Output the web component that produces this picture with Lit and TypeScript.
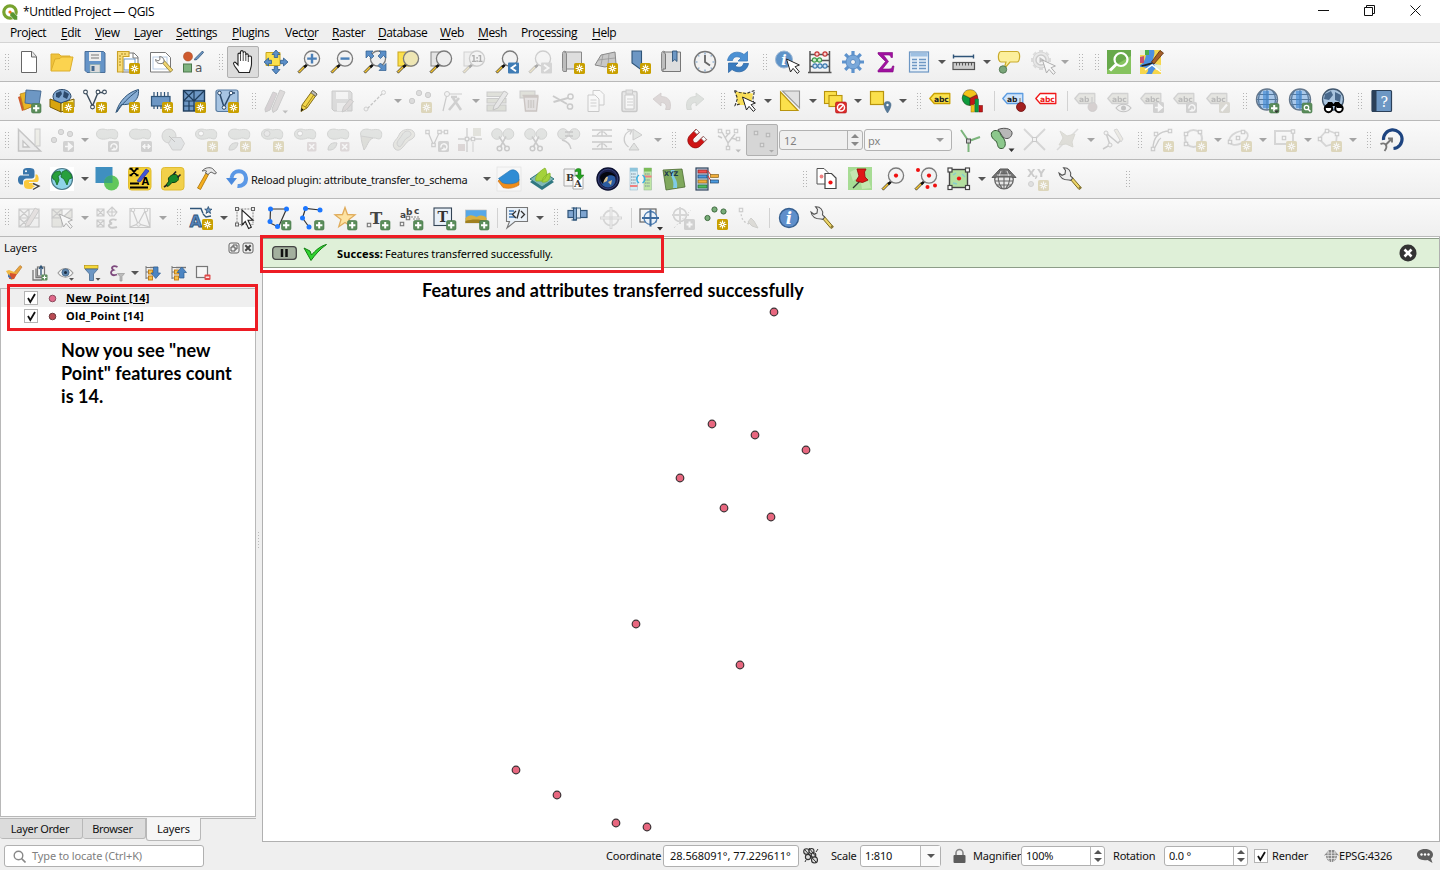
import { LitElement, html, css } from "lit";
import { customElement, property } from "lit/decorators.js";
import { styleMap } from "lit/directives/style-map.js";
import { unsafeSVG } from "lit/directives/unsafe-svg.js";

const BLUE = "#6d97c4";
const NAVY = "#2f5478";

/* ---- small drawing helpers ---- */
const P = (d: string, fill = "none", stroke = "none", w = 1, extra = "") =>
  `<path d="${d}" fill="${fill}" stroke="${stroke}" stroke-width="${w}" ${extra}/>`;
const C = (x: number, y: number, r: number, fill = "none", stroke = "none", w = 1) =>
  `<circle cx="${x}" cy="${y}" r="${r}" fill="${fill}" stroke="${stroke}" stroke-width="${w}"/>`;
const R = (x: number, y: number, w: number, h: number, fill = "none", stroke = "none", sw = 1, rx = 0) =>
  `<rect x="${x}" y="${y}" width="${w}" height="${h}" rx="${rx}" fill="${fill}" stroke="${stroke}" stroke-width="${sw}"/>`;
const T = (x: number, y: number, size: number, s: string, fill = "#333", extra = "") =>
  `<text x="${x}" y="${y}" font-size="${size}" fill="${fill}" ${extra}>${s}</text>`;

const BOLD = `font-weight="700" font-family="DejaVu Sans"`;
const SERIF = `font-weight="700" font-family="DejaVu Serif, serif"`;

const STAR =
  R(13, 13, 11, 11, "#c9a000", "none", 0, 1.6) +
  P("M18.5 14.6v7.8M14.6 18.5h7.8M15.8 15.8l5.4 5.4M21.2 15.8l-5.4 5.4", "none", "#fff", 1.1) +
  C(18.5, 18.5, 1.9, "#fff") + C(18.5, 18.5, 0.8, "#c9a000");
const PLUS = R(14.5, 14.500, 9.500, 9.500, "#5a8c5a", "#47784a", 0.6, 1.6) + P("M19.200 16v6.400M16 19.200h6.400", "none", "#fff", 2);
const TAG = (inner: string, fill: string = "#8e8e8e") => R(13, 13, 11, 11, fill, "none", 0, 1.6) + inner;
const T_ARROW = TAG(P("M15 18.5h4M18.6 15.4l3.6 3.1-3.6 3.1z", "#fff", "#fff", 1.6));
const T_ROT = TAG(P("M16 19.5a3 3 0 1 1 3.2 2.3M19 19.4v2.4h-2.4", "none", "#fff", 1.5));
const T_H = TAG(P("M16 18.5h5M14.4 18.5l2.6-2.4v4.8zM22.6 18.5l-2.6-2.4v4.8z", "#fff", "#fff", 0.8));
const T_X = R(14, 14, 9.500, 9.500, "#c0a0a4", "none", 0, 1.4) + P("M16.200 16.200l5 5M21.200 16.200l-5 5", "none", "#fff", 1.6);
const CORNER = P("M18.5 21.5h5.5l-2.7 3z", "#555");

const LENS = (fill = "#f2f2f2", inner = "") =>
  P("M9 16.5L7.6 15 1 21.6 2.4 23.2z", "#f5c52c", "#333", 0.8) + P("M7.2 17.4l2.8-2.8", "none", "#111", 2.4) +
  C(15, 8.6, 7.6, fill, "#7b7b7b", 1.3) + inner;

const BLOB = () =>
  P("M1.500 6c0-5 6-5.500 9-4.500s4.500-.5 8 0c5 .5 5 6 3 9-2 1.500-4.500-1-7-.5C10 12 1.500 12 1.500 6z", "#b4beb4", "#8a928a", 1);
const CUT =
  C(6, 6, 5.300, "#b4beb4", "#8a928a", 1) + C(17.500, 6, 5.300, "#b4beb4", "#8a928a", 1) +
  P("M8 8.500l6.500 10M15 8.500L9.500 18.500", "none", "#777", 1.6) + C(8.500, 20.500, 2.300, "none", "#777", 1.5) + C(16, 20.500, 2.300, "none", "#777", 1.5);
const CURSOR = P("M9.500 8l4 13 2.600-3.600 4.200 5 2-1.700-4.200-5 4.300-1.700z", "#fff", "#222", 1);
const LABEL = (text: string, fill: string, stroke: string, ink: string) =>
  P("M.8 9.500L5.200 4.500h15.600v10H5.200z", fill, stroke, 1.3, `stroke-linejoin="round"`) + T(5, 12.500, 7.600, text, ink, BOLD);
const SMALL = (x: number, y: number) => R(x - 1.7, y - 1.7, 3.4, 3.4, "#eee", "#777", 1.1);
const GLOBE =
  C(12, 10.5, 10.5, "#a9c8ea", "#66788c", 1.4) +
  P("M12 .5v20M6.5 1.8c-4 5-4 12.5 0 17.5M17.5 1.8c4 5 4 12.5 0 17.5M1.5 10.5h21M3 5.5h18M3 15.5h18", "none", "#56789c", 1.1) +
  P("M8 2h6v17H8z", "#3c86d2", "none", 0, `opacity=".6"`);
const WRENCH =
  P("M12 12l9 10.500 2.200-1.800L14 10z", "#edd568", "#7b6a20", 1) + P("M20.500 20.500l1.500 2 1.700-1.500-1.600-2z", "#8a7a3a") +
  P("M11 13C8 13 2 12 1 6l3 2.300 3-1.300.5-3.500L5.500.8c5-.3 8 3.500 7 8L14.700 11l-2 2.300z", "#eee", "#555", 1.1);
const BSTAR = "M12 1.5l2.5 7 7.5.4-6 4.6 2.2 7.2-6.2-4.2-6.2 4.2 2.2-7.2-6-4.6 7.5-.4z";
const NODE = (pts: number[][]) => pts.map(([x, y]) => C(x, y, 2.5, "#1d77ff")).join("");
const DOTS3 = C(4, 12, 2.7, "#aaa", "#777") + C(11, 4, 2.7, "#aaa", "#777") + C(20, 6, 2.7, "#aaa", "#777");
const LOFF = (t: string) => LABEL(t, "#c4c4ac", "#888", "#444");

const ICONS: Record<string, string> = {
  /* project toolbar */
  new: P("M4.5 1.5h10.5l4.500 5v16h-15z", "#fff", "#666", 1) + P("M14.5 1.5V7H19.500", "#e6e6e6", "#666", 1),
  open: P("M1 20.5V4h8l2 2h9v3", "#f0c33c", "#dcae2c", 1) + P("M1 21L5 9l5-.5 1.5-1.5H23l-3 14z", "#fbd34f", "#dcae2c", 1),
  save: P("M2 1.5h18.5l1.500 1.500v19.500H4l-2-2z", "#6594c8", "#4a6f99", 1) + R(6, 2, 12, 9, "#eee") + P("M8 5h8M8 8h8", "none", "#777", 1.2) +
    R(7, 14.5, 10, 8, "#dcdcdc", "#8aa", 0.6) + R(8.5, 16, 3, 5, "#44688f"),
  layout: P("M6 3h12l4 4v15H6z", "#fff", "#777", 1) + P("M17 3v5h5", "none", "#777", 1) + R(8, 9, 11, 11, "#fff", BLUE, 1) +
    P("M1.5 1.5H13v5H7v15.5H1.5z", "#f8dc78", "#c9a128", 1.1) + P("M3 6h2M3 9h2M3 12h2M3 15h2M6 3v2M9 3v2", "none", "#a47f1a", 0.9) + STAR,
  manager: P("M1.5 2.5h15l5 5v14.5H1.5z", "#fff", "#777", 1) + R(4, 7, 14, 12, "#fff", "#b9cde6", 1) +
    P("M13 12.5l8.5 9.5 2.3-2-8.5-9.5z", "#f1d571", "#8d7a2b", 0.8) + P("M13 13.5c-3 .5-6-.5-6.5-4l2.5 1.5 2-1.5-.3-3C14 7 15.5 9 15 12z", "#fff", "#777", 1),
  style: C(6, 6.5, 4.5, "#cf5a2e", "#a84820", 0.6) + P("M13 8.5l7.5-7.5 1 1.5-6.5 7-2.5.5z", BLUE, NAVY, 0.8) +
    R(1.5, 14, 8, 8, "#7fb37f", "#4c784c", 1) + T(13, 22, 12, "a", "#555", `font-family="DejaVu Sans"`),
  hand: P("M8 22.5c-1-3-5-6-5.5-9 0-1.5 1.5-1.8 2.5-.7L7 15V4.5c0-1.8 2.5-1.8 2.5 0V2c0-1.8 2.7-1.8 2.7 0v1c0-1.600 2.600-1.600 2.600.2V5c0-1.500 2.500-1.500 2.500.3V7c.3-1.500 3.200-1.300 3.200.5V14c0 4-1.500 5-2 8.500z", "#fff", "#222", 1.1) +
    P("M9.500 4.5V11M12.200 3v8M14.800 4.5V11M17.300 6.5V12", "none", "#222", 0.8),
  pan: P("M2 2.5h14v13H2z", "#fbe04c", "#caa51e", 1) +
    P("M12 0l4 4.5h-2.300v3h-3.400v-3H8zM12 24l4-4.500h-2.300v-3h-3.400v3H8zM0 12l4.500-4v2.300h3v3.400h-3V16zM24 12l-4.500-4v2.300h-3v3.400h3V16z", "#5b8fc8", "#2f5d8e", 0.8),
  zoomin: LENS("#f2f2f2", P("M15 3.8v9.6M10.2 8.6h9.600", "none", "#4b80b8", 2.4)),
  zoomout: LENS("#f2f2f2", P("M10.5 8.6h9", "none", "#4b80b8", 2.4)),
  full: LENS("#eee") + P("M3 1h7L8 3l3 3-2.500 2.500L5.500 5.500 3 8zM23 1h-7l2 2L15 6 17.500 8.500 20.500 5.500 23 8zM23 20.500h-7l2-2L15 15.500l2.500-2.500 3 3 2.500-2.500z", "#5b8fc8", "#2f5d8e", 0.7),
  zsel: R(2, 2, 14, 14, "#fbe04c", "#caa51e") + LENS("#eee6b4"),
  zlay: R(2, 2, 14, 14, "#e4e4e4", "#888") + LENS("#eee"),
  z11: R(2, 2, 14, 14, "#e4e4e4", "#888") + LENS("#eee") + T(9, 12, 8, "1:1", "#222", `${BOLD} textLength="12"`),
  zlast: LENS() + R(13, 12.5, 11, 11, "#3f7cb5", "none", 0, 1) + P("M21 14.8l-4.5 3.2 4.5 3.2", "none", "#fff", 1.9),
  znext: LENS() + R(13, 12.5, 11, 11, "#999", "none", 0, 1) + P("M16 14.8l4.5 3.2-4.5 3.2", "none", "#fff", 1.9),
  mapview: P("M1.5 3.5c0-3 4-3 4 0v18H3c-1.5 0-1.5-1.5-1.5-3z", "#bdbdbd", "#888") + P("M3.5 2H20.5v17H5.5V4c0-1-1-2-2-2z", "#dedede", "#888") + STAR,
  map3d: P("M1 15L7 5l14-3 1 12-11 3z", "#c8c8c8", "#888") + P("M4 10l17-2M9 4.5L7 15M15 3.5l-1 12", "none", "#999", 0.8) + STAR,
  bookmark: P("M5 1h9.5v19L5 13z", BLUE, NAVY, 1.1) + STAR,
  bookmarks: P("M1.5 3.5c0-3 4-3 4 0v18H3c-1.5 0-1.5-1.5-1.5-3z", "#bdbdbd", "#888") + P("M3.5 2H20.5v19.5H3V19h2.5V4z", "#dedede", "#777") + P("M12.5 1h4.5v10.5l-2.2-2-2.3 2z", BLUE, NAVY, 0.9),
  clock: C(12, 12, 10.5, "#f2f2f2", "#777", 1.4) + P("M12 5v7l5 3.500", "none", "#666", 1.8) + P("M12 2.5v2M12 19.5v2M2.5 12h2M19.5 12h2M5.300 5.300l1 1M18.700 5.300l-1 1M5.300 18.700l1-1M18.700 18.700l-1-1", "none", "#6d97c4", 1.1),
  refresh: P("M1.500 10.500C3 2 12 0 18 4.500l3.500-3v9.500h-9.500l3-3c-4-2.500-8-1-8.500 2.500z", "#4c91d4", "#3a7abb", 0.8) + P("M22.500 13.5C21 22 12 24 6 19.500l-3.500 3V13h9.500l-3 3c4 2.500 8 1 8.500-2.500z", "#3a7cc0", "#2f68a5", 0.8),
  identify: C(9, 9.5, 8.5, "#5f93c8", "#9bb7d4", 1) + T(6.2, 15, 14, "i", "#fff", `font-style="italic" ${SERIF}`) + `<g transform="translate(2 1)">${CURSOR}</g>`,
  abacus: P("M2 1v21.5M21.5 1v21.5M0 22.5h23.5M2 4.500h20M2 10.500h20M2 16.500h20", "none", "#555", 1.5) +
    [[9, 4], [17, 4]].map(([x, y]) => C(x, y, 2.1, "#fbd0d0", "#c43333", 1.1)).join("") +
    [[6.500, 10], [11.500, 10]].map(([x, y]) => C(x, y, 2.1, "#d0f0d0", "#3f9a4a", 1.1)).join("") +
    [[7, 16], [12, 16], [17, 16]].map(([x, y]) => C(x, y, 2.1, "#d0e4f8", "#3d7bb0", 1.1)).join(""),
  gear: P("M12 1v22M1 12h22M4.2 4.2l15.6 15.6M19.8 4.2L4.2 19.8", "none", "#5e93cd", 3.2) + C(12, 12, 7, "#79a8da", "#5a8cc4", 1) + C(12, 12, 2.5, "#f4f4f4", "#5a8cc4", 1),
  sigma: P("M4 2.500h14.500v5H17c-.5-2-1-2.500-3-2.500H9.5l5 6.5-6 7.500h6.500c2.500 0 3-1 3.500-3H20l-1 6H4v-1.5l7.500-9L4 4z", "#a010a0", "#7f0a80", 0.6),
  table: R(2.5, 2, 19, 20, "#e8f0f8", BLUE, 1.2) + R(3.5, 3, 17, 3.5, "#9ec0e2") + P("M5 9.5h5M12 9.5h7M5 12.5h5M12 12.5h7M5 15.5h5M12 15.5h7M5 18.5h5M12 18.5h7", "none", BLUE, 1.3),
  measure: P("M1.5 6.500h20M1.5 4.500v4M21.5 4.500v4", "none", NAVY, 1.4) + R(1, 12.5, 21.5, 7, "#ccc", "#555", 1.2) + P("M4.5 12.5v3M7.5 12.5v3M10.5 12.5v3M13.5 12.5v3M16.5 12.5v3M19.5 12.5v3", "none", "#555", 1),
  tip: P("M4 1.5h16c4 0 3 10.5 0 10.5h-7l-6 7 2-7H4C.5 12 .5 1.5 4 1.5z", "#fcef9c", "#c9ab2c", 1.2) + C(6, 19.5, 3.7, "#7aa67a", "#557a55", 1),
  action: P("M11 0v20M1 10h20M4 3l14 14M18 3L4 17", "none", "#aaa", 4) + C(11, 10, 8, "#ccc", "#999", 1) + C(11, 10, 5, "#eee", "#777", 1.4) + P("M9.5 7l4.500 3-4.500 3z", "#555") + `<g transform="translate(3 2)">${CURSOR}</g>`,
  quickmap: R(0, 0, 24, 24, "#86c35f") + P("M0 0h24v6L0 20z", "#67a94b") + C(14, 9.5, 6.5, "none", "#fff", 2.2) + P("M9.5 14L3 20.5", "none", "#fff", 3),
  osm: R(0, 0, 21, 24, "#f6d64c") + P("M7 0h7c2 5-3 9 0 13l6 3v3c-6-1-6 1-8 5H6c5-5 1-7-6-7v-2c7-4 5-10 7-15z", "#4d90e0") + P("M0 0h5v5H0zM14 14l7 1v5l-5 0z", "#e8f0da") +
    P("M0 7l4-1v7H0z", "#c8506e") + P("M5 0h4v5H5z", "#4ab04a") + P("M5 20l7-5 9 7", "none", "#fff", 1.500) + P("M11.500 12L20 .5l3.500 2.500-9.500 11z", "#a5602c", "#5c2c0c", 0.8) + P("M12.500 13c-4 1-5 2-11 3", "none", "#222", 1.6),

  /* data source toolbar */
  dsm: P("M1 8l11-4 3 14-10 4z", "#cf5a2e") + P("M3 5l11-3 2 15-9 4z", "#e9b427", "#b98718", 0.8) + P("M9 1l15 1-2 14-14-2z", BLUE, "#42678e", 0.9) + PLUS,
  gpkg: P("M0 10l11 4v9L0 18z", "#d9a510", "#7a5c07", 1) + P("M24 10l-13 4v9l13-5z", "#fbe97c", "#7a5c07", 1) + P("M3 8c0-10 18-10 18 0l-2 3-8 3-7-3z", "#7fa6cf", "#2c4a6c", 1) +
    P("M6 4l5-2 1 3-3 4-3-1zM14 2l5 3-2 5-4-2z", "#2c4a6c") + STAR,
  shp: P("M3 3.500L9.500 17 15 3.500h6", "none", "#3c4c5c", 1.4) + C(2.500, 3, 1.9, "#fff", "#3c4c5c", 1.1) + C(9.500, 18, 1.9, "#fff", "#3c4c5c", 1.1) + C(15, 3, 1.9, "#fff", "#3c4c5c", 1.1) + C(21.500, 3, 1.9, "#fff", "#3c4c5c", 1.1) + STAR,
  feather: P("M0 23.5C3 12 12 3 22.500.5c.5 5-1 10-5 12.500-3 2-8 3-12 2.500z", "#88add4", "#2f5478", 1) + P("M1 23C6 15 12 9 21 2", "none", "#2f5478", 1) + STAR,
  chip: P("M5 3v5M8.5 3v5M12 3v5M15.5 3v5M19 3v5M5 16v4M8.5 16v4M12 16v4", "none", NAVY, 1.2) + R(2.5, 7.5, 18.500, 9.5, BLUE, NAVY, 1.2) + STAR,
  mesh: R(1.5, 1.5, 21, 20.5, BLUE, "#1f3d5c", 1.4) + P("M1.5 12h21M12 1.5V22M1.5 1.5L12 12M12 1.5L1.5 12M12 12L22.5 1.5M1.5 17H12M7 12v10", "none", "#1f3d5c", 1.2) + STAR,
  virtual: R(1, 1, 22, 21.5, "#a7c4e2", "#55799f", 1.2, 2) + P("M4.500 4L9 18 16 4h4", "none", "#2c4a6c", 1.5) + C(4.500, 4, 1.800, "#fff", "#2c4a6c") + C(9, 18.5, 1.800, "#fff", "#2c4a6c") + C(16, 4, 1.800, "#fff", "#2c4a6c") + STAR,
  edits: P("M1 20L9 3l4 1.500L6 21l-4.500 2z", "#a89", "#777") + P("M8 20L16 1l5 2-8 18-4 2.500z", "#b0a0a0", "#777") + CORNER,
  pencil: P("M4 22.5l1-6.5L15.5 1.500l4.500 3.500L10 19z", "#f2d64a", "#866f1a", 1) + P("M15.5 1.5l4.500 3.500-1.500 2.300-4.500-3.500z", "#bbb", "#555", 0.8) + P("M8.5 18L17 5.500M5 16l5 3", "none", "#a3851e", 1) + P("M4 22.5l.5-3.500 2 1.500z", "#111"),
  saveedit: P("M2 2h18l2 2v18H4l-2-2z", "#aaa", "#777") + R(6, 3, 12, 7, "#eee") + R(7, 14, 10, 8, "#ddd") + P("M12 23l1.5-5L20 10l3.500 2.500-7 8.500z", "#b8a0a0", "#777"),
  line: P("M4.5 19.5L19.5 4.5", "none", "#666", 1.3, `stroke-dasharray="3 1.5"`) + C(3, 20, 2, "#eee", "#888") + C(20.5, 3.5, 2, "#eee", "#888"),
  points: DOTS3 + STAR,
  vertex: P("M2 22L6 5h15", "none", "#777", 1.2) + C(6, 5, 2.5, "#eee", "#777") + P("M8 21L18 9M12 9l8 12M10 8h6", "none", "#888", 2.6),
  form: R(1, 3, 19, 4.5, "#b0b890", "#777") + R(1, 9.5, 19, 4.5, "#b0b890", "#777") + R(1, 16, 19, 6, "#b0b890", "#777") + P("M7 21l1-4L18 2l4 2.5L12 19z", "#ccc", "#666"),
  trash: R(1, 2, 15, 7, "#b0b890", "#777") + P("M5 8h14l-1.500 14h-11zM3.500 6.500h16", "#cbb", "#865", 1.4) + P("M9.5 11v8M12 11v8M14.500 11v8", "none", "#876", 1.5),
  cut: P("M1 7l14 8M1.5 13L16 9", "none", "#777", 2) + C(18.5, 7.5, 2.6, "none", "#777", 1.5) + C(18, 17.5, 2.6, "none", "#777", 1.5),
  copy: P("M8 1.5h7l4 4V16H8z", "#fff", "#777") + P("M3 6h7l4 4v12.5H3z", "#fff", "#777") + P("M5.5 11h6M5.5 14h6M5.5 17h6", "none", "#888", 1.2),
  paste: R(4, 2.5, 15, 20, "#ccc", "#777", 1.5, 1.5) + P("M7 6h9v14H7z", "#fff", "#777") + R(8, 1, 6.5, 4, "#bbb", "#777") + P("M9 10h6M9 13h6M9 16h6", "none", "#888"),
  undo: P("M2 10l8-6v3.500c7 0 11 4 9 13h-4.500c2-5-1-7-4.500-7v3.500z", "#b99", "#977", 0.8),
  redo: P("M20 10l-8-6v3.500C5 7.500 1 11.500 3 20.500h4.500c-2-5 1-7 4.500-7V17z", "#aba", "#898", 0.8),
  select: P("M2 2.500l18 2-2 11.500-13 0z", "#f8de58") + P("M1.500 1.500l5 2 7 1 8-3-1.500 8 1 7M1.500 1.500l3 8-2.500 7 6-2", "none", "#333", 1.1, `stroke-dasharray="3 1.500"`) + CURSOR,
  selval: P("M2.5 3V21.5H20z", "#fbe04c", "#b8940d", 1.1) + P("M4.500 2h17v17z", "#e2e2e2", "#999", 1.1),
  desel: R(1.5, 2.5, 12, 12, "#fbe04c", "#b8940d", 1.1) + R(6, 6.5, 13, 11, "#fbe04c", "#b8940d", 1.1) + R(12.5, 13, 11, 11, "#dd2c2c", "#a11", 0.6, 1.5) + C(18, 18.5, 3.5, "none", "#fff", 1.5) + P("M15.7 21l4.7-5", "none", "#fff", 1.5),
  selloc: R(2.5, 2.5, 13, 13, "#fbe04c", "#b8940d", 1.2) + P("M19.5 24c-6-9-3-11.5 0-11.5s6 2.500 0 11.500z", "#567a99", "#4a6a88", 0.6) + C(19.5, 16, 1.2, "#fff"),
  abc: LABEL("abc", "#fbe24e", "#c9a000", "#222"),
  pie: C(8, 9, 7.500, "#f2c013") + P("M8 9L1 5.500A7.500 7.500 0 0 0 8 16.500z", "#0d9b3c", "#222", 0.4) + P("M8 9L15 5.500A7.500 7.500 0 0 1 8 16.500z", "#c21717", "#222", 0.4) + P("M8 9L1 5.500A7.500 7.500 0 0 1 15 5.500z", "#f3c31a", "#222", 0.4) +
    R(9, 16, 3.500, 7, "#f0c21a", "#a07a00", 0.5) + R(13, 10, 3.500, 13, "#0d9b3c", "#064", 0.5) + R(17, 16.500, 3.500, 6.500, "#c21717", "#700", 0.5),
  pinned: LABEL("ab", "#cfe4fb", "#5b9be0", "#222") + P("M18 9v9", "none", "#aaa", 2) + C(19, 18, 4.5, "#a32020", "#701010", 0.8),
  unplaced: LABEL("abc", "#fff", "#f01818", "#f01818"),
  lpin: LOFF("ab") + C(18.5, 18, 4.5, "#a88", "#877", 0.8) + P("M18 8v7", "none", "#888", 1.5),
  leye: LOFF("abc") + P("M9 19c4-5 11-5 15 0-4 5-11 5-15 0z", "#eee", "#666", 1.2) + C(16.5, 19, 2.5, "#666"),
  lmove: LOFF("abc") + T_ARROW,
  lrot: LOFF("abc") + T_ROT,
  ledit: LOFF("abc") + TAG(P("M15.5 22l5.5-6.5", "none", "#fff", 2.2), "#aaa37f"),
  netadd: GLOBE + PLUS + P("M19 21.5h5l-2.500 2.500z", "#333"),
  netfind: GLOBE + R(14, 14, 10, 10, "#5a8c5a", "#47784a", 0.6, 1.6) + C(18.5, 18.5, 2.2, "none", "#fff", 1.3) + P("M20 20l2.500 2.500", "none", "#fff", 1.5),
  meta: C(12, 10.5, 10.5, "#a9c4de", "#42586f", 1.3) + P("M4 5l6-3 2 4-4 5-5-1zM14 3l6 3-1 7-5-2z", "#49698c") + C(7.5, 19.5, 3.7, "#fff", "#000", 2) + C(18, 19.5, 3.7, "#fff", "#000", 2) + P("M7 13h4l1.500 2 1.500-2h4l4 6h-6l-1-2h-4l-1 2H4z", "#000"),
  help: R(2, 1.5, 19.500, 21, BLUE, "#2b4059", 1.2, 1) + R(2, 1.5, 4.500, 21, "#2b4059") + T(10.500, 17.500, 14, "?", "#fff", `font-family="DejaVu Serif"`),

  /* advanced digitizing toolbar */
  cad: P("M1.5 1.5v21.5h22z", "#ddd", "#666", 1.5) + P("M6 13v6h6z", "#fff", "#666", 1.3) + R(18, 1, 5, 17, "#ddb", "#777"),
  mvfeat: DOTS3 + T_ARROW,
  rotf: BLOB() + T_ROT,
  scalef: BLOB() + T_H,
  simpl: C(8, 8, 7, "#b4beb4", "#888") + P("M11 9.500h9l3.500 6-3.500 6.500h-8.500l-4-6.500z", "#b8c4cc", "#888") + P("M8 8l6 6", "none", "#555"),
  ringadd: BLOB() + C(7, 5.5, 2.5, "#fff", "#888") + STAR,
  partadd: BLOB() + P("M2 22c0-6 5-8 9-7-1 6-5 7.500-9 7z", "#b4beb4", "#888") + STAR,
  ringfill: BLOB() + C(7, 5.5, 3, "#ccc", "#888") + STAR,
  ringdel: BLOB() + C(7, 5.5, 2.5, "#fff", "#888") + T_X,
  partdel: BLOB() + P("M2 22c0-6 5-8 9-7-1 6-5 7.500-9 7z", "#b4beb4", "#888") + T_X,
  reshape: BLOB() + P("M2 8c0 5 2 10 3 14 3-3 4-10 9-12z", "#b0b39c", "#888"),
  offset: P("M3 21c-5-6 2-9 4-14C9 1 18 0 21 3s2 7-3 9-9 14-15 9z", "#c8c8b0", "#888") + P("M6 18c-3-4 2-7 4-11 2-4 6-5 8-3s1 4-3 6-5 11-9 8z", "#b4beb4", "#888"),
  splitf: P("M3 4l5.500 13 6-13h6", "none", "#777", 1.2) + SMALL(2.500, 4) + SMALL(8.500, 17) + SMALL(14.500, 4) + SMALL(21, 4) + T_ROT,
  splitp: P("M9 0v24M0 11h24", "none", "#888", 1.4) + SMALL(9, 11) + SMALL(15, 11) + R(15, 0, 8, 8, "#bb9", "none") + R(0, 16, 7, 7, "#b99") + P("M15 14v10", "none", "#888"),
  cutA: CUT,
  cutB: CUT,
  cutC: C(6, 6, 5.300, "#b4beb4", "#888") + C(17.500, 6, 5.300, "#b4beb4", "#888") + P("M8 4h8M8 8h8", "none", "#666", 1.3) + P("M5 12c4 1 8 3 9 9", "none", "#777", 1.4),
  align: P("M2 2h20M2 8h20M2 14h20M2 21h20M12 2v6M12 14v7", "none", "#777", 1.3) + P("M7 7l3-3h4l3 3M7 19l3-3h4l3 3", "none", "#777", 1.2),
  rotsym: P("M5.500 19C-1 14 0 5 8 2.500M4 1.500l5 .5-2 4.500", "none", "#777", 1.3) + P("M10 1l9 6-9 5zM6 22l5-7 5 7z", "#bcc4bc", "#777"),
  magnet: `<g transform="translate(2.500 2.500) scale(.78) rotate(-135 12 12) scale(1 -1) translate(0 -24)">${P("M2.5 2h6v10.5c0 4.500 7 4.500 7 0V2h6v11c0 12.5-19 12.5-19 0z", "#cf1414", "#8f0d0d", 0.9)}${P("M3 2h5v4H3zM16 2h5v4h-5z", "#fff", "#888", 0.9)}</g>`,
  allly: P("M11 22V15L5 4M11 15l7-9M5 10l-4-2M14 10l8 2M8 10l5-6", "none", "#777", 1.4) + SMALL(3, 3) + SMALL(11, 4) + SMALL(19, 3) + SMALL(21, 11) + SMALL(11, 20) + CORNER,
  segm: SMALL(6, 5) + SMALL(18, 7) + SMALL(12, 17) + P("M19 22h5l-2.500 2.500z", "#555"),
  topo: P("M11.500 13L4 2M12 13l11-4M11.500 13v11", "none", "#7cb57c", 2) + R(9.500, 11, 4, 4, "#ccc", "#555"),
  overlap: P("M8 1.5c8-3 15 0 14 4.5s-6 6-9 3z", "#b8b8b8", "#555") + P("M1.500 5c2-4 8-3 9 1 1 3 2.500 3 4 6 2 5 0 9-3.500 8.500-4 0-3-5-5-7.500-2-1-5.500-4-4.500-8z", "#8cc88c", "#355a35", 1) + P("M18.5 20.5h6l-3 3.500z", "#333"),
  cross: P("M1 1l21 21M22 1L1 22", "none", "#999", 1.8) + R(9.500, 9.500, 4, 4, "#eee", "#777"),
  selfint: P("M1 22L22 1", "none", "#aaa", 1.6) + P("M4 3l7 5 8-2-3 8 1 5-7-3-7 1 4-7z", "#b5b292", "#a29f80"),
  trace: P("M2 21l7-4L5 5l12 10 4-4L14 2", "none", "#777", 1.5) + C(5, 5, 2, "#eee", "#777") + C(9, 17, 2, "#eee", "#777") + P("M13 2l3-1 6 10-2 3z", "#d8d0b0", "#999"),
  curve: P("M3 21C3 9 9 3 20 3M3 21c4-2 4-9 8-11", "none", "#777", 1.3) + SMALL(3, 21) + SMALL(6, 6) + SMALL(20, 3) + STAR,
  circ: C(10.500, 10.500, 8.5, "none", "#999", 2.2) + SMALL(3, 6) + SMALL(17, 4) + SMALL(3, 16) + STAR,
  ellip: `<ellipse cx="10.5" cy="10" rx="10" ry="6" fill="none" stroke="#999" stroke-width="1.8" transform="rotate(-25 10.5 10)"/>` + SMALL(10, 10) + SMALL(15, 4) + SMALL(2, 14) + STAR,
  rectg: R(2, 3, 18, 13, "none", "#999", 2) + SMALL(11, 10) + SMALL(20, 3.5) + STAR,
  polyg: P("M9 2l10 4-1 9-10 3L1 11z", "none", "#999", 1.8) + SMALL(9, 3) + SMALL(19, 6) + SMALL(2, 11) + STAR,
  tracing: P("M4.500 12a9.300 9.300 0 1 1 10 8.500", "none", "#1d4480", 3.2) + P("M1.500 16c5-2 8 2 4 7M7 16.500l5-5M9 10.500h4V14.500", "none", "#777", 1.9),

  /* plugins toolbar */
  python: P("M11.500 1c-5 0-5.500 1.500-5.500 3.500V7.500h6v1H4C1.500 8.500 1 11 1 13s1 4.500 3.500 4.500H6v-2.500c0-2 1.500-3.500 3.500-3.500h5c2 0 3-1 3-3V4.500C17.500 2 16 1 11.500 1z", "#3a76ab") + C(9, 4.3, 1, "#fff") +
    P("M12 22c5 0 6-1.500 6-3.500V16h-6v-1h8c2.500 0 2-6 0-7.500L18.500 7.500v2.500c0 2-1.500 3-3.500 3h-5C8 13 7 14 7 15.500v3C7 21 9 22 12 22z", "#fbc93d") + P("M16 16.500l6 2.500-6 3.500", "none", "#f6f6f6", 3.400) + P("M16 16.500l6 2.500-6 3.500", "none", "#444", 1.4),
  world: R(0, 0, 24, 24, "#fff") + C(12, 12, 10.5, "#8fd4e8", "#4c7a8a", 1.2) + P("M2 9l3-4 5-1 1 3-3 2 1 4-2 5-2-5-2-1zM12 5l4-2 5 4 1 4-3 1-2 6-3-6-3-2z", "#27a03c", "#186a26", 0.8),
  shapes: R(0.5, 0, 17, 16, "#3f8fc0") + C(16.5, 16, 7.5, "#62c75c", "none") + P("M17.500 8.500V16H9a7.500 7.500 0 0 1 8.500-7.500z", "#3aa47d"),
  xa: R(0.5, 0.5, 22.500, 22.500, "#f2cf33", "#e0bc32", 1, 3) + P("M3 1.5l6 7M9 1.5l-6 7M1.500 1.800h3M7.500 1.800h3M1.500 8.200h3M7.500 8.200h3", "none", "#000", 1.9) + P("M9 14L18 2l3 2L12 15z", "#4255d8", "#2838b0", 0.8) + T(13.500, 18, 10, "A", "#000", BOLD) + P("M2 16.500h9M2 20.500h18", "none", "#000", 1.8),
  plug: R(0.5, 0.5, 22.500, 22.500, "#f2d04a", "#e0bc32", 1, 3) + P("M5 18l3-4c-2-3 1-5 4-6.500 2-1 6 1 5.500 4 0 3-4 4.500-6.500 4l-4 4z", "#19872a", "#0b3e12", 1) + P("M12.500 7.500l2.500-3M16.500 10.500l3-3M3 20l3-2", "none", "#222", 1.6),
  hammer: P("M3.500 21L12 6l2.500 1.500L6.500 22.500z", "#f5ae1e", "#b07a10", 0.9) + P("M8.500 3.500c3-3 7-3.500 10-2l4 4.500-1.500 1-4-2-3 2.500-2.500-1.500 1-2c-2-1-2.500 0-4.500 0z", "#e8e8e8", "#555", 0.9),
  surface: R(0, 0, 24, 24, "#f7f7f7", "#ddd", 0.6) + P("M1 14l5 6.500c6 2 12 0 16-2.500V12L3 12z", "#f08d1a", "#c46c10", 0.6) + P("M1.500 11.500L13 3.500c4-2 9 1 9 6l0 4c-3 4-13 4-17 2z", "#2f8cd4", "#2272b0", 0.6),
  leaf: P("M0 15l12-8 12 8-12 8z", "#2f7680") + P("M0 12l12-8 12 8-12 8z", "#7fb7b4", "#2f7680", 1) + P("M6 14C4 9 10 4 15 1c3 5 2 10-3 13zM12 15c0-4 3-7 8-9 1 6-2 10-8 9z", "#a4d23c", "#84b42a", 0.8),
  tofield: P("M1 2h11v17H1z", "#f5f5f5", "#aaa") + T(3, 14, 10, "B", "#333", SERIF) + P("M10 9h10v13H10z", "#fff", "#aaa") + T(11, 20, 10, "A", "#333", SERIF) + P("M12 4.500c0-3 4-4 6-2v5.500h3l-4.500 5-4-5H15V4.500z", "#25a020", "#157010", 0.5),
  night: C(12, 12, 11, "#1a1f48", "#0b1030", 1.4) + C(12, 13, 7.500, "#2a5aa0") + P("M8 9l4 1-1 4-4 2zM12 15l4-2-1 5z", "#d8c090") + P("M4 10c2-6 13-7 16 0-5-3-11-3-13 7-2-2-3-4-3-7z", "#05070f") + C(12, 12, 9.8, "none", "#3e4880", 0.8),
  fields: R(1, 1, 7.500, 22, "#d6ecf4", "#9bc", 0.6) + R(15, 1, 7.500, 22, "#bfe6a4", "#9b9", 0.6) + R(1, 1, 7.500, 3.500, "#8ec5dc") + R(15, 1, 7.500, 3.500, "#7cbc58") + P("M2 7h5M2 10h5M2 13h5M2 16h5M16 7h5M16 13h5M16 16h5M16 19h5", "none", "#789", 1, `stroke-dasharray="1.500 .7"`) + P("M1 19h7.500M15 9.500h7.500", "none", "#f08080", 2) + P("M10 8c-3 2-3 6 0 8M13.500 8c3 2 3 6 0 8", "none", "#38b0e0", 1.4),
  xyz: P("M1 3l19-1 3 18-19 3z", "#7fa85c", "#4a6a30", 0.8) + P("M13 3c-5 6 4 8 2 18h-4c2-9-4-12-2-18z", "#7fcbe8") + T(2, 9, 6.500, "XYZ", "#1c3a50", BOLD),
  attr: R(1, 1, 12, 22, "#b8cce4", "#33475e", 1.2) + R(3, 3, 9, 3, "#f05050", "#822", 0.7) + R(3, 8, 9, 3, "#4a9ae0", "#246", 0.7) + R(3, 13, 9, 3, "#f2ae3c", "#862", 0.7) + R(3, 18, 9, 3, "#4cbc5c", "#263", 0.7) + P("M13 4l3 4M13 9l3 5", "none", "#d33") + R(15.5, 7.5, 8, 3, "#f2ae3c", "#862", 0.7) + R(15.5, 13, 8, 3, "#4a9ae0", "#246", 0.7),
  cpcoord: P("M2 1.5h7l4 4V17H2z", "#fff", "#555") + C(6.500, 9.5, 1.9, "#f08080") + P("M10 6.500H16.500l4.500 4.500v10.500h-11z", "#fff", "#444", 1.2) + C(15.5, 15.500, 2.1, "#f01010"),
  pushpin: R(0, 0, 24, 23, "#a7dc94") + P("M2 5l6-3 5 6-8 6zM13 16l8-2 2 7-9 1z", "#c4e8b0") + P("M5 21l7-7", "none", "#333", 1.3) + P("M9 2h9l-1.500 3 .5 5 3 3-5.500 2.500-6.500-1.500 3-5z", "#e01818", "#a00c0c", 0.9),
  zpt: LENS("#f2f2f2", C(15, 8.6, 2.1, "#f01010")),
  zpts: LENS("#f2f2f2", C(15, 8.6, 2.1, "#f01010")) + C(4, 3, 2, "#f01010") + C(13.500, 20, 2, "#f01010") + C(21, 18.500, 2, "#f01010"),
  extent: R(2.500, 2.500, 18, 18, "#b4dfa0", "#444", 1.4) + [[3, 3], [20.500, 3], [3, 20.500], [20.500, 20.500]].map(([x, y]) => R(x - 2, y - 2, 4, 4, "#fff", "#444", 1.2)).join("") + C(12, 11.500, 2.1, "#f01010") + P("M6 8l3-2M15 7l3 3M6 16l4 1", "none", "#8cc", 1.5),
  crsglobe: C(12, 12.500, 9.300, "#e6e6e6", "#666", 1.3) + P("M0 10.500L8 2h8l8 8.500-6-.5H6z", "#777", "#555", 1) + P("M5 6.500h14M3 14h18M5 18h14M12 2v20M8 3c-3 6-2 14 2 18M16 3c3 6 2 14-2 18", "none", "#666", 1.1) + P("M5 8h14M9 4l-2 5M15 4l2 5", "none", "#ddd", 0.9),
  xy: T(2, 9.500, 11, "X,Y", "#777", `${BOLD} textLength="18"`) + C(6, 17, 2.5, "#bbb", "#888") + STAR,
  wrench: WRENCH,

  /* mesh / annotation toolbar */
  mdig: P("M2 3h20v18H2zM2 12h20M12 3v18M2 3l10 9M12 3L2 12M12 12L2 21M2 12l10 9", "#e8e8e8", "#777", 1.2) + P("M8 21l1-4L18 2l4 2.500L13 19z", "#c9b4b0", "#777"),
  msel: P("M2 3h20v9H2zM2 3l10 9M12 3L2 12M12 3v9l10-9", "#c8c8b0", "#777", 1.2) + P("M2 12h10v9H2z", "#c8c8b0", "#777") + CURSOR,
  mexp: P("M2 3h7v7H2zM2 3l7 7M9 3l-7 7M2 14h7v7H2zM2 14l7 7M9 14l-7 7M17 1l5 5-3 4h-4l-3-4zM12 6h10M17 1v9", "#eee", "#777", 1.1) + P("M21.500 14c-6-2-9 2-4.500 3.500-6 1-3 6 5 3.500", "none", "#777", 2),
  mtrans: P("M2 2.5h20v19H2zM5 5l5 13 7-13M5 5H2M17 5l5 16M2 21l8-3 12 3", "none", "#777", 1.2) + C(5, 4, 1.8, "#eee", "#777") + C(10.5, 18.5, 1.8, "#eee", "#777") + C(18, 4, 1.8, "#eee", "#777"),
  annlayer: P("M1 2.5h11l2 5M14 8l3 3 5-1", "none", "#2f5478", 1.4) + T(0.500, 21, 16, "A", "#5585bd", `${BOLD} stroke="#2f5478" stroke-width=".8"`) + `<g transform="translate(15 0) scale(.36)">${P(BSTAR, BLUE, NAVY, 2.500)}</g>` + STAR,
  annsel: R(3, 3, 16, 15.500, "none", "#888", 1, 0) + P("M3 3h16v15.500H3z", "none", "#f3f3f3", 1.3, `stroke-dasharray="1.500 1.500"`) + [[3, 3], [19, 3], [3, 18.5]].map(([x, y]) => R(x - 1.5, y - 1.5, 3, 3, "#eee", "#666")).join("") + P("M8 4v15l3.3-3.500 3.300 7 2.700-1.200-3.300-7H19z", "#fff", "#222", 1.1),
  annpoly: P("M3.500 3h16l-8 18-8.500-4z", "#eee", "#333", 1.2) + NODE([[3.500, 3], [19.500, 3], [3, 15.500], [10.500, 20.5]]) + PLUS,
  annline: P("M20 4L5.500 2.500 2.5 12 9 21", "none", "#333", 1.2) + NODE([[20, 4], [5.500, 2.500], [2.5, 12], [9, 21]]) + PLUS,
  annstar: P(BSTAR, "#fde3a2", "#e0ac5c", 1.3) + PLUS,
  anntext: SMALL(3, 19) + T(4, 18, 16.500, "T", "#444", SERIF) + PLUS,
  anncurve: T(1, 12, 9, "a", "#444", BOLD) + T(7, 8.5, 9, "b", "#444", BOLD) + T(15, 7.5, 9, "c", "#444", BOLD) + SMALL(3, 18) + SMALL(9, 12) + P("M12 11h8v4M14 13h6", "none", "#888", 1.2, `stroke-dasharray="2 1"`) + PLUS,
  annbox: R(2, 2, 17.5, 17.5, "#e8f0f8", "#345", 1.1) + T(5.500, 16, 14, "T", "#333", SERIF) + PLUS,
  annpic: R(0.5, 4, 21, 13, "#56a8e8", "#bbb", 0.6) + P("M.5 17v-5c4-4 7-3 11-1 4-2 7-2 10 1v5z", "#d8b040") + P("M.5 17v-2c6-2 14-2 21 0v2z", "#a08020") + PLUS,
  htmltip: P("M1.5 1.5h21v14H10l-8 6.5 2.5-6.5h-3z", "#eaf1f8", "#777", 1.1) + P("M4 5h5M4 8h4M4 11h6", "none", BLUE, 2) + P("M11 5L7.5 8.5 11 12M16 5l3.500 3.5L16 12M14.5 3.5l-2.500 9", "none", "#333", 1.3),
  xsec: R(2, 4.500, 19, 7, "#7fa5d0", NAVY, 1.2) + R(7.500, 2, 3, 12, "#86aad0", NAVY, 1.1) + R(10.500, 2, 4, 10, "#dfe9f3", NAVY, 0.9) + P("M5.500 2h3M5.500 14h5", "none", NAVY, 1.200),
  gps: C(12, 12, 7.5, "none", "#999", 1.8) + P("M12 1v22M1 12h22", "none", "#999", 2.8) + P("M12 2v20M2 12h20", "none", "#eee", 1) + C(12, 12, 2, "#aaa"),
  gpscenter: R(2, 3, 16, 13, "none", "#666", 1.2) + C(12.500, 12, 6.5, "#eaf1f8", "#4f7fb4", 1.3) + P("M12.500 3.5v17M4 12h17", "none", "#3d6b9e", 2) + P("M19 21h6l-3 3.5z", "#333"),
  gpsadd: C(9, 9, 6.5, "none", "#888", 1.5) + P("M9 1v17M1 9h17", "none", "#999", 2) + P("M3 22l17-18", "none", "#999", 1, `stroke-dasharray="2 2"`) + TAG(P("M18.5 15.500v6M15.500 18.5h6", "none", "#fff", 2)),
  trackadd: [[3.500, 12], [10.5, 3.5], [19.500, 5.500]].map(([x, y]) => C(x, y, 2.6, "#79ad79", "#3f6b3f")).join("") + STAR,
  trackreset: P("M4 4c0 9 2 12 8 14", "none", "#777", 1.3, `stroke-dasharray="2 2"`) + SMALL(4, 4) + P("M14 12l3 3 4 7-6-2-4-4z", "#b5ab92", "#887"),
  info: C(12, 12, 9.5, "#5f8fcb", "#365f8f", 1.4) + T(8.700, 18, 16.500, "i", "#fff", `font-style="italic" ${SERIF}`),
  reload: P("M0 11h11L5.5 18z", "#4a8ade") + P("M5.500 11c1-9 14-9 14.500 0 .3 6-4.500 8.500-8.500 8", "none", "#5b98e6", 4),
};

const PANEL: Record<string, string> = {
  brush: P("M9 8.500l6-7L17 3l-5 7z", "#e9a33c", "#b0742a", 0.6) + P("M1 7l3-1 8 3-3 6-3 1z", "#f0b840") + P("M5 9l7 1-3 5-5 0z", "#d5522e") + P("M3 10l3 3 1 2.500-4-2.500z", "#4a72a8"),
  group: P("M2 6v10h9M5 4.5v9h7", "none", "#777", 1.3) + R(6.5, 3, 7, 9, "#f4f4f4", "#777", 1.2) + P("M10 11V3M8 5l2-3 2 3", "none", NAVY, 1.3) + R(10.5, 10.5, 6, 6, "#5a8c5a", "none", 0, 1) + P("M13.500 11.500v4M11.500 13.500h4", "none", "#fff", 1.2),
  eye: P("M1 9c4-6 11-6 15 0-4 5.500-11 5.500-15 0z", "#f6f6f6", "#999", 1.1) + C(8.5, 8.5, 3.6, "#5f86ac", "#3e6288", 0.8) + C(8.5, 8.5, 1.5, "#1d2e42") + P("M12 14h5l-2.500 2.800z", "#555"),
  filter: R(1.5, 1.5, 13.500, 3, "#f5d83a", "#b8940d", 0.7) + P("M2 5h13L10.5 10v6.500h-4V10z", BLUE, "#44698f", 0.8) + P("M12.5 14h5L15 16.800z", "#555"),
  expr: P("M9.500 3C5 .5 2 4 5.500 6 1 7.500 3 13 9 10.500", "none", "#7e4a7e", 1.8) + P("M9.5 9.500h7L14 12.5V17h-2v-4.500z", "#bbb", "#999", 0.7),
  expand: P("M2 2v13M2 3.5h4M2 8h3M2 14h3", "none", "#777", 1) + R(4.5, 6, 4, 4, "#f5c04a", "#c07a10", 0.9) + R(4.5, 12, 4, 4, "#f5c04a", "#c07a10", 0.9) + P("M6 3.5h8", "none", "#777", 1.4) + P("M9.5 3h4.500v6h2.500l-4.700 5.500L7 9h2.500z", "#4c85c2", "#2c5c90", 0.7),
  collapse: P("M2 2v13M2 3.5h4M2 8h3M2 14h3", "none", "#777", 1) + R(4.5, 6, 4, 4, "#f5c04a", "#c07a10", 0.9) + R(4.5, 12, 4, 4, "#f5c04a", "#c07a10", 0.9) + P("M6 3.5h10", "none", "#777", 1.4) + P("M9.5 14h4.500V8.500h2.500l-4.700-5.500L7 8.500h2.500z", "#4c85c2", "#2c5c90", 0.7),
  remove: R(1.500, 2.5, 11, 11, "#f6f6f6", "#777", 1.2) + R(9.500, 10.5, 6, 5.5, "#e04a4a", "none", 0, 1) + P("M10.700 13.2h3.600", "none", "#fff", 1.3),
};

/* Toolbar rows. "|" drag handle, ":" separator, "v" menu arrow, "-" prefix marks a disabled item. */
const BARS = [
  "| new open save layout manager style | hand! pan zoomin zoomout full zsel zlay -z11 zlast -znext mapview map3d bookmark bookmarks clock refresh | identify abacus gear sigma table v measure v tip -action -v | | quickmap osm",
  "| dsm gpkg shp feather chip mesh virtual | -edits pencil -saveedit -line -v -points -vertex -v -form -trash -cut -copy -paste -undo -redo | select v selval v desel v selloc v | abc pie : pinned unplaced : -lpin -leye -lmove -lrot -ledit | netadd netfind meta | help",
  "| -cad -mvfeat -v -rotf -scalef -simpl -ringadd -partadd -ringfill -ringdel -partdel -reshape -offset -splitf -splitp -cutA -cutB -cutC -align -rotsym -v | magnet -allly -segm! spin combo topo overlap -cross -selfint -v -trace | -curve -circ -v -ellip -v -rectg -v -polyg -v | tracing",
  "| python world v shapes xa plug hammer reload v surface leaf tofield night fields xyz attr gap=71 | cpcoord pushpin zpt zpts extent v crsglobe -xy wrench gap=31 |",
  "| -mdig -msel -v -mexp -mtrans -v | annlayer v annsel annpoly annline annstar anntext anncurve annbox annpic : htmltip v | xsec -gps : gpscenter -gpsadd trackadd -trackreset : info wrench",
];

const MENUS: [string, number, number][] = [
  ["Project", 3, 51], ["Edit", 0, 34], ["View", 0, 39], ["Layer", 0, 42], ["Settings", 0, 56], ["Plugins", 0, 53],
  ["Vector", 4, 47], ["Raster", 0, 46], ["Database", 0, 62], ["Web", 0, 38], ["Mesh", 0, 43], ["Processing", 3, 71], ["Help", 0, 40],
];

const POINTS = [[774, 312], [712, 424], [755, 435], [806, 450], [680, 478], [724, 508], [771, 517], [636, 624], [740, 665], [516, 770], [557, 795], [616, 823], [647, 827]];

const arrows = html`<span class="steps"><svg width="8" height="14" viewBox="0 0 8 14"><path d="M0 5h8L4 1zM0 9h8L4 13z" fill="currentColor" /></svg></span>`;
const check = html`<span class="check"><svg width="11" height="11" viewBox="0 0 11 11"><path d="M2 5l2.3 4L9 1" fill="none" stroke="#111" stroke-width="1.8" /></svg></span>`;

@customElement("tool-bar")
class ToolBar extends LitElement {
  @property() items = "";
  static styles = css`
    :host { display: flex; align-items: center; overflow: hidden; color: #111; font: 11px "Noto Sans", sans-serif; }
    :host > * { flex: none; }
    .handle { width: 16px; height: 17px; box-sizing: border-box; padding-left: 8px; }
    .handle:first-of-type { margin-left: -3px; }
    .dots { display: block; width: 5px; height: 17px; background: radial-gradient(circle at 0.5px 0.5px, #b4b4b4 0.5px, transparent 0.8px) 0 0 / 3px 3px; }
    .sep { width: 3.600px; height: 20px; box-sizing: border-box; border-left: 1px solid #d2d2d2; margin-left: 3px; }
    .icon { width: 33px; height: 32px; display: flex; align-items: center; padding-left: 4px; box-sizing: border-box; }
    .icon svg { display: block; overflow: visible; }
    .off svg { opacity: 0.33; filter: saturate(0.5); }
    .on { background: #dcdcdc; border: 1px solid #b0b0b0; border-radius: 2px; width: 32px; margin-right: 1px; padding-left: 3px; }
    .off.on { background: #d6d6d6; }
    .drop { width: 12px; display: flex; justify-content: center; }
    .drop i { border: 4px solid transparent; border-top-color: #555; border-bottom: 0; }
    .drop.off i { border-top-color: #a4a4a4; }
    .reload { width: 258px; display: flex; align-items: center; box-sizing: border-box; padding-left: 3px; white-space: nowrap; letter-spacing: -0.28px; }
    .reload svg { margin-right: 1px; display: block; }
    .field { box-sizing: border-box; height: 20px; border: 1px solid #b2b2b2; border-radius: 3px; color: #808080; display: flex; align-items: center; justify-content: space-between; padding-left: 4px; }
    .spin { width: 84px; background: #f0f0f0; margin-right: 1px; }
    .combo { width: 88px; height: 22px; background: #f6f6f6; margin-right: 1px; padding-right: 7px; padding-left: 3px; }
    .combo i { border: 4px solid transparent; border-top-color: #999; border-bottom: 0; }
    .steps { width: 14px; height: 18px; border-left: 1px solid #b2b2b2; display: flex; align-items: center; justify-content: center; color: #888; }
  `;
  private item(token: string) {
    const off = token.startsWith("-");
    const on = token.endsWith("!");
    const name = token.replace(/^-|!$/g, "");
    if (name === "|") return html`<span class="handle"><span class="dots"></span></span>`;
    if (name === ":") return html`<span class="sep"></span>`;
    if (name === "v") return html`<span class="drop ${off ? "off" : ""}"><i></i></span>`;
    if (name.startsWith("gap=")) return html`<span style=${styleMap({ width: name.slice(4) + "px" })}></span>`;
    if (name === "spin") return html`<span class="field spin">12${arrows}</span>`;
    if (name === "combo") return html`<span class="field combo">px<i></i></span>`;
    if (name === "reload")
      return html`<span class="reload"><svg width="24" height="24" viewBox="0 0 24 24">${unsafeSVG(ICONS.reload)}</svg><span>Reload plugin: attribute_transfer_to_schema</span></span>`;
    return html`<span class="icon ${off ? "off" : ""} ${on ? "on" : ""}"><svg width="24" height="24" viewBox="0 0 24 24">${unsafeSVG(ICONS[name])}</svg></span>`;
  }
  render() {
    return this.items.split(" ").map((t) => this.item(t));
  }
}

@customElement("app-root")
class AppRoot extends LitElement {
  static styles = css`
    :host { display: flex; flex-direction: column; width: 1440px; height: 870px; position: relative; overflow: hidden; background: #efefef; color: #111; font: 11px/14px "Noto Sans", sans-serif; letter-spacing: -0.1px; }
    * { box-sizing: border-box; }
    svg { display: block; }
    tool-bar { flex: none; height: 39px; border-bottom: 1px solid #b9b9b9; background: linear-gradient(#fafafa, #efefef); }
    tool-bar:last-of-type { height: 38px; }
    .title { height: 23px; flex: none; background: #fff; display: flex; align-items: center; padding-left: 2px; font: 12px "Open Sans", sans-serif; color: #000; }
    .title .name { margin-left: 5px; flex: 1; letter-spacing: -0.36px; }
    .win { display: flex; gap: 35px; padding-right: 19px; margin-top: -2px; }
    .menu { height: 20px; flex: none; display: flex; align-items: center; padding-left: 10px; border-bottom: 1px solid #d4d4d4; font: 12px "Open Sans", sans-serif; letter-spacing: -0.42px; color: #000; }
    .menu u { text-underline-offset: 2px; }
    .work { flex: 1; display: flex; min-height: 0; }
    .dock { width: 256px; display: flex; flex-direction: column; }
    .head { height: 21px; display: flex; align-items: center; padding: 0 2px 0 4px; gap: 2px; }
    .head span { flex: 1; }
    .tools { height: 30px; display: grid; grid-template-columns: 26px 26px 26px 25px 26px 10px 26px 25px 26px; padding-left: 1px; align-items: center; justify-items: center; }
    .tri { border: 4px solid transparent; border-top-color: #555; border-bottom: 0; }
    .tree { flex: 1; background: #fff; border: 1px solid #b8b8b8; min-height: 0; }
    .layer { height: 18px; display: flex; align-items: center; padding-left: 23px; font-weight: 700; color: #000; letter-spacing: 0.2px; }
    .layer:first-child { background: #efefef; }
    .layer svg { flex: none; }
    .layer > svg { margin: 0 9px 0 10px; }
    .layer:first-child .lname { text-decoration: underline; }
    .check { width: 14px; height: 14px; flex: none; background: #fff; border: 1px solid #b4b4b4; display: flex; align-items: center; justify-content: center; }
    .note { font: 700 18px/23px Lato, sans-serif; letter-spacing: 0.060px; color: #000; white-space: nowrap; }
    .tree .note { margin: 14px 0 0 60px; }
    .tabs { height: 25px; display: flex; align-items: flex-start; padding-top: 1px; }
    .tab { height: 21px; background: #dcdcdc; border: 1px solid #b8b8b8; border-left-width: 0; display: flex; align-items: center; justify-content: center; border-radius: 0 0 3px 3px; }
    .t1 { width: 83px; padding-right: 2px; letter-spacing: -0.3px; } .t2 { width: 63px; padding-right: 3px; letter-spacing: -0.3px; }
    .t3 { width: 55px; height: 23px; background: #f6f6f6; border-top: 0; border-left-width: 1px; }
    .rest { flex: 1; border-top: 1px solid #b8b8b8; }
    .split { width: 6px; display: flex; align-items: center; justify-content: center; }
    .split i { width: 2px; height: 16px; background: radial-gradient(circle at 0.5px 0.5px, #bbb 0.5px, transparent 0.8px) 0 0 / 2px 3px; }
    .canvas { flex: 1; background: #fff; border: 1px solid #b0b0b0; border-top: 0; display: flex; flex-direction: column; }
    .msg { height: 30px; margin-top: 1px; flex: none; background: #dff0d8; border: solid #8d9d88; border-width: 1px 0; display: flex; align-items: center; padding: 0 22px 0 9px; color: #000; letter-spacing: -0.14px; }
    .msg b, .msg .text { padding-top: 2px; }
    .msg .pause { margin-right: 6px; }
    .msg .tick { margin-right: 9px; }
    .msg b { margin-right: 2px; letter-spacing: 0.1px; }
    .msg .text { flex: 1; }
    .msg > svg { flex: none; }
    .free { flex: 1; position: relative; overflow: hidden; }
    .free .note { margin: 11px 0 0 159px; }
    .free svg { position: absolute; left: 0; top: 0; }
    .status { height: 28px; flex: none; display: grid; align-items: center; grid-template-columns: 4px 200px 402px 57px 136px 32px 29px 81px 32px 48px 84px 8px 51px 84px 6px 18px 52px 15px 78px 20px; white-space: nowrap; letter-spacing: -0.200px; }
    .box { height: 22px; background: #fff; border: 1px solid #b0b0b0; border-radius: 3px; display: flex; align-items: center; justify-content: space-between; padding-left: 4px; }
    .coord { padding-left: 6px; letter-spacing: -0.05px; }
    .find { color: #808080; padding-left: 8px; justify-content: flex-start; gap: 6px; letter-spacing: -0.120px; }
    .steps, .pick { width: 14px; height: 20px; border-left: 1px solid #b8b8b8; display: flex; align-items: center; justify-content: center; color: #555; }
    .pick { width: 20px; background: #fafafa; }
    .short { height: 20px; }
    .short .steps { height: 18px; }
    .mark { position: absolute; border: 3px solid #ed1c24; pointer-events: none; }
    .m1 { left: 260px; top: 235px; width: 404px; height: 38px; }
    .m2 { left: 7px; top: 284px; width: 251px; height: 47px; }
  `;

  private panelIcon(name: string) {
    return html`<svg width="18" height="18" viewBox="0 0 18 18">${unsafeSVG(PANEL[name])}</svg>`;
  }

  render() {
    return html`
      <div class="title">
        <svg width="16" height="16" viewBox="0 0 16 16">
          <circle cx="8" cy="8" r="6.2" fill="none" stroke="#78a32f" stroke-width="3.2" />
          <path d="M8 8h3.500l4 4.500V16h-3.500L8 11.500z" fill="#589632" stroke="#fff" stroke-width=".5" /><circle cx="8" cy="8" r="1.6" fill="#ee7913" />
        </svg>
        <span class="name">*Untitled Project — QGIS</span>
        <span class="win">
          <svg width="11" height="11"><path d="M0 5.5h11" stroke="#111" /></svg>
          <svg width="11" height="11"><path d="M.5 2.5h8v8h-8zM2.5 2.5v-2h8v8h-2" fill="none" stroke="#111" /></svg>
          <svg width="11" height="11"><path d="M.5.5l10 10M10.5.5l-10 10" stroke="#111" /></svg>
        </span>
      </div>
      <div class="menu">
        ${MENUS.map(([s, k, w]) => html`<span style=${styleMap({ width: w + "px" })}>${s.slice(0, k)}<u>${s[k]}</u>${s.slice(k + 1)}</span>`)}
      </div>
      ${BARS.map((b) => html`<tool-bar items=${b}></tool-bar>`)}
      <div class="work">
        <div class="dock">
          <div class="head">
            <span>Layers</span>
            <svg width="12" height="12"><rect x="1" y="1" width="10" height="10" rx="2" fill="none" stroke="#666" /><path d="M3 5h4v4H3zM5 5V3h4v4H7" fill="none" stroke="#555" /></svg>
            <svg width="12" height="12"><rect x="1" y="1" width="10" height="10" rx="2" fill="none" stroke="#666" /><path d="M3.3 3.3l5.4 5.4M8.7 3.3L3.3 8.7" stroke="#444" stroke-width="2" /></svg>
          </div>
          <div class="tools">
            ${this.panelIcon("brush")}${this.panelIcon("group")}${this.panelIcon("eye")}${this.panelIcon("filter")}${this.panelIcon("expr")}
            <i class="tri"></i>${this.panelIcon("expand")}${this.panelIcon("collapse")}${this.panelIcon("remove")}
          </div>
          <div class="tree">
            <div class="layer">${check}<svg width="9" height="9"><circle cx="4.5" cy="4.5" r="3.3" fill="#e0688a" stroke="#8b4a5c" /></svg><span class="lname">New_Point [14]</span></div>
            <div class="layer">${check}<svg width="9" height="9"><circle cx="4.5" cy="4.5" r="3.3" fill="#b84a52" stroke="#6c3a3e" /></svg><span class="lname">Old_Point [14]</span></div>
            <div class="note">Now you see "new<br />Point" features count<br />is 14.</div>
          </div>
          <div class="tabs"><span class="tab t1">Layer Order</span><span class="tab t2">Browser</span><span class="tab t3">Layers</span><span class="rest"></span></div>
        </div>
        <div class="split"><i></i></div>
        <div class="canvas">
          <div class="msg">
            <svg class="pause" width="25" height="14"><rect x=".7" y=".7" width="23.6" height="12.6" rx="3" fill="#a3b09e" stroke="#444" stroke-width="1.3" /><path d="M10 3v8M14.500 3v8" stroke="#111" stroke-width="2.5" /></svg>
            <svg class="tick" width="25" height="18" viewBox="0 0 25 18"><path d="M1 4l6 3 1.5 4C12 7 17 2 23.500.5 17 5 12 11 8 16.500z" fill="#2fd32f" stroke="#128012" /></svg>
            <b>Success:</b><span class="text">Features transferred successfully.</span>
            <svg width="18" height="18"><circle cx="9" cy="9" r="8.5" fill="#333" /><path d="M5.5 5.5l7 7M12.5 5.5l-7 7" stroke="#fff" stroke-width="2.6" /></svg>
          </div>
          <div class="free">
            <div class="note">Features and attributes transferred successfully</div>
            <svg width="1176" height="573" viewBox="263 268 1176 573">
              ${POINTS.map(([x, y]) => unsafeSVG(C(x, y, 3.8, "#e8677f", "#3a3134", 1.2)))}
            </svg>
          </div>
        </div>
      </div>
      <div class="status">
        <span></span>
        <span class="box find"><svg width="13" height="13"><circle cx="5.5" cy="5.5" r="4.3" fill="none" stroke="#888" stroke-width="1.4" /><path d="M8.5 8.5l4 4" stroke="#888" stroke-width="1.6" /></svg>Type to locate (Ctrl+K)</span>
        <span></span>
        <span>Coordinate</span>
        <span class="box coord">28.568091°, 77.229611°</span>
        <svg width="24" height="18" viewBox="-4 0 24 18"><g fill="#ddd" stroke="#333" stroke-width="1.1"><circle cx="3.500" cy="4.500" r="2.800" /><circle cx="8.500" cy="4" r="2.500" /><circle cx="5" cy="10" r="2.600" /><circle cx="10.500" cy="8" r="2.300" /><circle cx="11.500" cy="13" r="3" /></g><path d="M1 2l12 13M6 1l8 10M13 5l2-3M3 13l-1 2" stroke="#333" fill="none" /></svg>
        <span>Scale</span>
        <span class="box">1:810<span class="pick"><i class="tri"></i></span></span>
        <svg width="32" height="16" viewBox="-12 0 32 16"><path d="M3 8V5a3.500 3.500 0 0 1 7 0v3" fill="none" stroke="#888" stroke-width="1.6" /><rect x=".5" y="7" width="12" height="8" rx="1" fill="#5c5c5c" /></svg>
        <span>Magnifier</span>
        <span class="box short">100%${arrows}</span>
        <span></span>
        <span>Rotation</span>
        <span class="box short">0.0 °${arrows}</span>
        <span></span>
        ${check}
        <span>Render</span>
        <svg width="15" height="14" viewBox="0 0 15 14"><path d="M0 6.500L5 1h5l5 5.500h-2c0 4-3 6.500-5.500 6.500S2 10.500 2 6.500z" fill="#8a8a8a" /><path d="M1 6.500h13M2.500 4h10M2.500 9.500h10M7.500 1v12M4.500 2c-1 4-.5 8 1 10.500M10.500 2c1 4 .5 8-1 10.500" stroke="#eee" stroke-width=".7" fill="none" /></svg>
        <span>EPSG:4326</span>
        <svg width="17" height="16" viewBox="0 0 17 16"><path d="M8 1c5 0 8 2.500 8 5.500 0 2-1 3-2 4l1.500 4.500-5-3C4 13 0 10.500 0 6.500 0 3.500 3 1 8 1z" fill="#5f5f5f" /><circle cx="4.500" cy="6.500" r="1.200" fill="#fff" /><circle cx="8" cy="6.500" r="1.200" fill="#fff" /><circle cx="11.500" cy="6.500" r="1.200" fill="#fff" /></svg>
      </div>
      <div class="mark m1"></div>
      <div class="mark m2"></div>
    `;
  }
}
